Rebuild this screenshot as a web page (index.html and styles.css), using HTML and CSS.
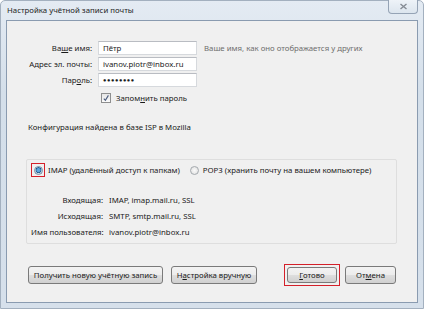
FILE: index.html
```html
<!DOCTYPE html>
<html>
<head>
<meta charset="utf-8">
<link rel="stylesheet" href="styles.css">
</head>
<body>
<div class="window">
  <div class="titlebar">
    <span class="title">Настройка учётной записи почты</span>
    <div class="close"><svg width="9" height="7" viewBox="0 0 9 7"><path d="M1.5 1 L7.5 6 M7.5 1 L1.5 6" stroke="#858b94" stroke-width="1.4" fill="none"/></svg></div>
  </div>
  <div class="client">
    <div class="form">
      <label class="lbl">Ва<u>ш</u>е имя:</label>
      <div class="input">Пётр</div>
      <span class="hint">Ваше имя, как оно отображается у других</span>
      <label class="lbl">Адрес эл. почты:</label>
      <div class="input">ivanov.piotr@inbox.ru</div>
      <span></span>
      <label class="lbl">Пар<u>о</u>ль:</label>
      <div class="input pwd">●●●●●●●●</div>
      <span></span>
      <span></span>
      <div class="check"><span class="box"><svg width="8" height="8" viewBox="0 0 8 8"><path d="M1.8 4.6 L3.4 6.4 L6.4 1.4" stroke="#4b5c7e" stroke-width="1.1" fill="none"/></svg></span><span>Запом<u>н</u>ить пароль</span></div>
      <span></span>
    </div>
    <p class="found">Конфигурация найдена в базе ISP в Mozilla</p>
    <div class="group">
      <div class="radios">
        <span class="hl"><span class="radio on"></span></span>
        <span class="rtext">IMAP (удалённый доступ к папкам)</span>
        <span class="radio"></span>
        <span class="rtext r2">POP3 (хранить почту на вашем компьютере)</span>
      </div>
      <div class="details">
        <span class="dl">Входящая:</span><span>IMAP, imap.mail.ru, SSL</span>
        <span class="dl">Исходящая:</span><span>SMTP, smtp.mail.ru, SSL</span>
        <span class="dl">Имя пользователя:</span><span>ivanov.piotr@inbox.ru</span>
      </div>
    </div>
    <div class="buttons">
      <button class="btn b1">Получить новую учётную запись</button>
      <button class="btn b2">Н<u>а</u>стройка вручную</button>
      <span class="spacer"></span>
      <span class="redbox"><button class="btn b3"><u>Г</u>отово</button></span>
      <button class="btn b4">От<u>м</u>ена</button>
    </div>
  </div>
</div>
</body>
</html>
```
FILE: styles.css
```css
* { box-sizing: border-box; }
html, body { margin: 0; padding: 0; }
body {
  width: 424px; height: 309px; overflow: hidden;
  font-family: "Noto Sans", "Open Sans", sans-serif;
  font-size: 7.8px; color: #1a1a1a;
  background: #fff;
}
u { text-decoration: underline; text-underline-offset: 1px; text-decoration-thickness: 1px; }
.window {
  width: 424px; height: 309px;
  display: flex; flex-direction: column;
  background: linear-gradient(180deg, #e4ebf3 0%, #d4dfea 30%, #d6e0eb 100%);
  border: 1px solid #a3b0bf;
  border-radius: 5px 5px 0 0;
}
.titlebar {
  height: 19px; flex: none;
  display: flex; justify-content: space-between; align-items: flex-start;
  padding-left: 6px;
}
.title { line-height: 19px; color: #1e1e1e; }
.close {
  width: 30px; height: 14px; margin-right: 5px; margin-top: -1px;
  border: 1px solid #95a3b5; border-top: none;
  border-radius: 0 0 4px 4px;
  background: linear-gradient(#eef3f8, #dce5ee);
  display: flex; align-items: center; justify-content: center;
}
.client {
  flex: 1; margin: 0 5px 5px 5px;
  background: #f0f0f0;
  border: 1px solid #8a9bb0;
  padding: 20px 0 0 0;
}
.form {
  display: grid;
  grid-template-columns: 85px 99px auto;
  column-gap: 6px; row-gap: 2px;
  align-items: center;
}
.form .hint { margin-left: 1px; }
.lbl { text-align: right; white-space: nowrap; }
.input {
  height: 14px; background: #fff;
  border: 1px solid #d6d9dd;
  border-top-color: #b9bcc2;
  padding: 0 4px; line-height: 12px;
}
.pwd { font-size: 5.6px; letter-spacing: 0.6px; line-height: 12px; }
.hint { color: #6e6e6e; }
.check { display: flex; align-items: center; gap: 5px; height: 17px; padding-left: 3px; }
.box {
  width: 10px; height: 10px; border: 1px solid #8e8f8f; background: linear-gradient(#e6e6e6, #fbfbfb);
  display: flex; align-items: center; justify-content: center;
}
.found { margin: 15px 0 0 21px; line-height: 12px; }
.group {
  margin: 26px 0 0 19px; width: 371px; height: 85px;
  border: 1px solid #dedede; border-radius: 2px;
  padding: 3px 0 0 4px;
}
.radios { display: flex; align-items: center; height: 14px; }
.hl { width: 14px; height: 14px; border: 1px solid #d4202a; display: flex; align-items: center; justify-content: center; margin-right: 3px; }
.radio {
  width: 9px; height: 9px; border-radius: 50%; border: 1px solid #a4a9ae;
  background: radial-gradient(circle, #fafafa, #dedede);
}
.radio.on { background: radial-gradient(circle at 50% 45%, #5aa4db 0 1.6px, #1e5a8c 2.6px, #cfdbe5 3.2px); border-color: #7490a8; }
.rtext { margin-right: 10px; white-space: nowrap; }
.r2 { margin-left: 4px; }
.details {
  display: grid; grid-template-columns: 72px auto; column-gap: 6px;
  margin-top: 15px; line-height: 16px;
}
.dl { text-align: right; white-space: nowrap; }
.buttons { display: flex; align-items: center; margin: 20px 0 0 21px; width: 368px; }
.btn {
  font-family: inherit; font-size: 7.8px; color: #1a1a1a;
  height: 18px; padding: 0 2px;
  border: 1px solid #7a7a7a; border-radius: 3px;
  background: linear-gradient(#f3f3f3 0%, #ececec 50%, #dedede 51%, #d0d0d0 100%);
  white-space: nowrap;
}
.b1 { width: 135px; }
.b2 { width: 86px; margin-left: 8px; }
.spacer { flex: 1; }
.redbox { border: 1px solid #d4202a; padding: 2px; display: flex; margin-right: 5px; }
.b3 { width: 50px; height: 16px; }
.b4 { width: 51px; }
```
